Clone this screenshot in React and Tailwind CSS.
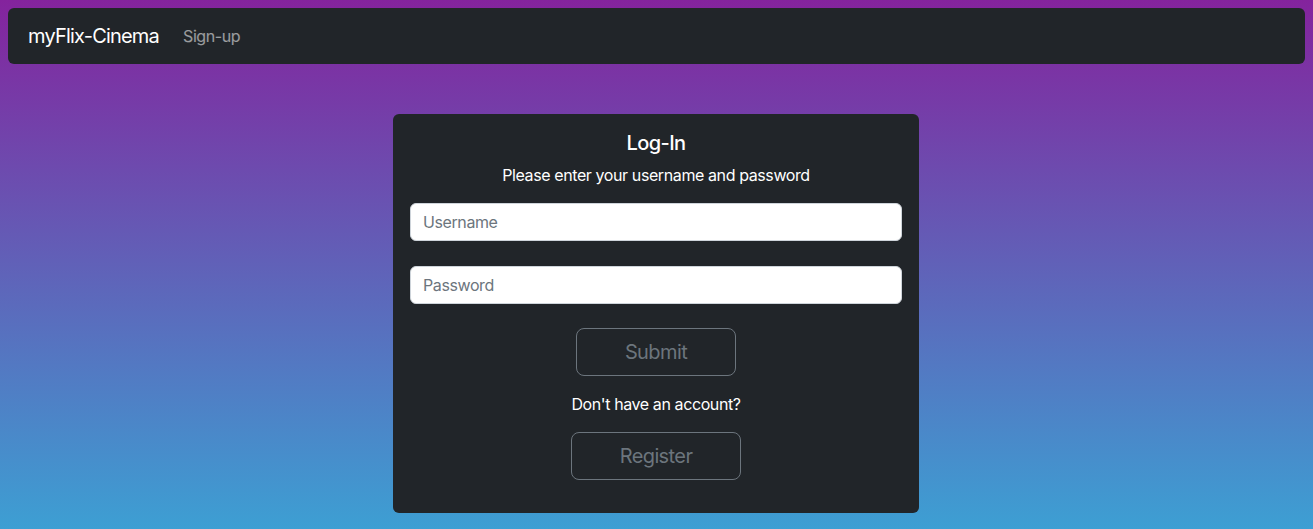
export default function App() {
  return (
    <div
      className="min-h-[529px] w-full bg-linear-to-b/srgb from-[#84239d] to-[#3d9fd3] p-2 text-white"
      style={{ fontFamily: 'Inter, "Liberation Sans", sans-serif' }}
    >
      <nav className="flex h-[56px] items-center rounded-md bg-[#212529] px-5">
        <span className="mr-6 text-[20px] leading-[30px] tracking-[-0.04em] text-white">myFlix-Cinema</span>
        <span className="text-[16px] tracking-[-0.025em] text-white/55">Sign-up</span>
      </nav>

      <div className="mt-[50px] flex justify-center pr-px">
        <div className="flex w-[526px] flex-col items-center rounded-md bg-[#212529] px-[17px] pt-[17px] pb-[33px] tracking-[-0.025em]">
          <h5 className="text-[20px] font-medium leading-[24px] tracking-[-0.03em]">Log-In</h5>
          <p className="mt-[8px] text-[16px] leading-[24px]">Please enter your username and password</p>

          <input
            className="mt-[16px] h-[38px] w-full rounded-md border border-[#ced4da] bg-white px-3 text-[16px] tracking-[-0.025em] text-[#212529] placeholder:text-[#6c757d]"
            placeholder="Username"
          />
          <input
            className="mt-[25px] h-[38px] w-full rounded-md border border-[#ced4da] bg-white px-3 text-[16px] tracking-[-0.025em] text-[#212529] placeholder:text-[#6c757d]"
            placeholder="Password"
            type="password"
          />

          <button className="mt-[24px] h-[48px] w-[160px] rounded-lg border border-[#6c757d] text-[20px] tracking-[-0.03em] text-[#6c757d]">
            Submit
          </button>

          <p className="mt-[16px] text-[16px] leading-[24px]">Don't have an account?</p>

          <button className="mt-[16px] h-[48px] w-[170px] rounded-lg border border-[#6c757d] text-[20px] tracking-[-0.03em] text-[#6c757d]">
            Register
          </button>
        </div>
      </div>
    </div>
  );
}
